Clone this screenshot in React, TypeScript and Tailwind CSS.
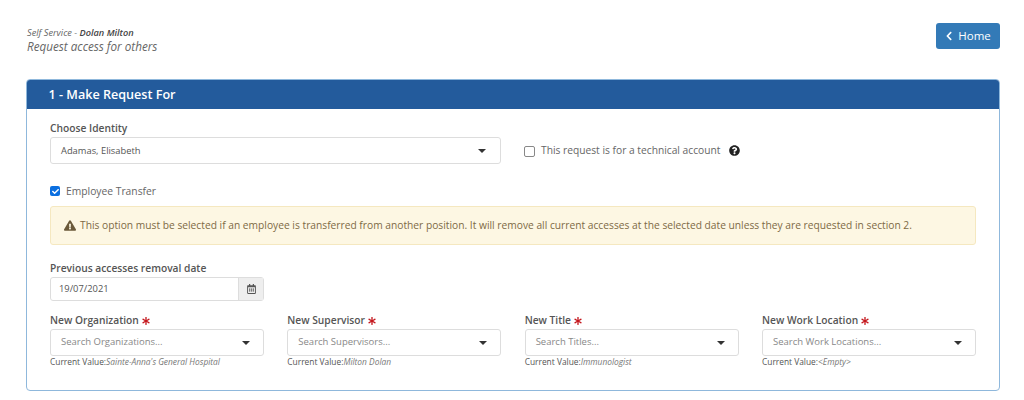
import { FaAsterisk, FaCheck, FaChevronLeft, FaExclamationTriangle, FaQuestionCircle, FaRegCalendarAlt } from "react-icons/fa";

const FIELDS = [
  { label: "New Organization", placeholder: "Search Organizations...", current: "Sainte-Anna's General Hospital" },
  { label: "New Supervisor", placeholder: "Search Supervisors...", current: "Milton Dolan" },
  { label: "New Title", placeholder: "Search Titles...", current: "Immunologist" },
  { label: "New Work Location", placeholder: "Search Work Locations...", current: "<Empty>" },
];

function Caret() {
  return <span className="h-0 w-0 border-x-[4px] border-t-[4px] border-x-transparent border-t-[#333]" />;
}

export default function App() {
  return (
    <div className="h-[400px] w-[1024px] overflow-hidden bg-white font-['Open_Sans',sans-serif] text-[#555]">
      <div className="flex items-start justify-between pl-[27px] pr-[24px] pt-[23px]">
        <div className="pt-[4px] italic">
          <div className="text-[9.2px] leading-[12px] text-[#666]">
            Self Service - <span className="font-semibold text-[#444]">Dolan Milton</span>
          </div>
          <div className="text-[11.7px] leading-[15px] text-[#666]">Request access for others</div>
        </div>
        <div className="flex h-[26px] w-[64px] items-center justify-center gap-[5px] rounded-[3px] bg-[#337ab7] text-[11.5px] text-white">
          <FaChevronLeft className="h-[10px] w-[8px]" />
          Home
        </div>
      </div>

      <div className="ml-[26px] mt-[25px] h-[312px] w-[974px] overflow-hidden rounded-[4px] border border-[#8fb8dc]">
        <div className="flex h-[29px] items-center bg-[#235b9c] pl-[21.5px] pt-[1px] text-[12.6px] font-semibold text-white">
          1 - Make Request For
        </div>

        <div className="pl-[23px] pr-[23px]">
          <div className="pt-[13px] text-[10.24px] font-semibold leading-[13px] text-[#555]">Choose Identity</div>
          <div className="mt-[2px] flex items-center">
            <div className="flex h-[27px] w-[451px] items-center justify-between rounded-[3px] border border-[#ddd] pl-[10px] pr-[14px] pt-[1px] text-[9.35px] text-[#555]">
              Adamas, Elisabeth
              <Caret />
            </div>
            <span className="ml-[23px] mt-[1px] h-[11px] w-[11px] rounded-[2px] border border-[#888] bg-white" />
            <span className="ml-[6px] mt-[1px] text-[10.24px] text-[#666]">This request is for a technical account</span>
            <FaQuestionCircle className="ml-[9px] h-[11px] w-[11px] text-[#222]" />
          </div>

          <div className="mt-[20px] flex items-center">
            <span className="flex h-[10px] w-[10px] items-center justify-center rounded-[2px] bg-[#0b6fe0]">
              <FaCheck className="h-[7px] w-[7px] text-white" />
            </span>
            <span className="ml-[6px] text-[10.3px] leading-[14px] text-[#666]">Employee Transfer</span>
          </div>

          <div className="mt-[8px] flex h-[39px] w-[926px] items-center rounded-[3px] border border-[#f5e8c0] bg-[#fdf7e3] pl-[13px] text-[10.24px] text-[#7d6a45]">
            <FaExclamationTriangle className="mr-[4px] h-[11px] w-[12px] text-[#6b5a3a]" />
            This option must be selected if an employee is transferred from another position. It will remove all current accesses at the selected date unless they are requested in section 2.
          </div>

          <div className="mt-[17px] text-[10.24px] font-semibold leading-[13px] text-[#555]">
            Previous accesses removal date
          </div>
          <div className="mt-[2px] flex h-[24px] w-[214px] rounded-[3px] border border-[#ddd]">
            <div className="flex flex-1 items-center pl-[8px] text-[9.35px] text-[#555]">19/07/2021</div>
            <div className="flex w-[25px] items-center justify-center border-l border-[#ddd] bg-[#eee]">
              <FaRegCalendarAlt className="h-[10px] w-[9px] text-[#555]" />
            </div>
          </div>

          <div className="mt-[13px] grid w-[926px] grid-cols-4 gap-x-[23.3px]">
            {FIELDS.map((f) => (
              <div key={f.label}>
                <div className="flex items-center text-[10.24px] font-semibold leading-[13px] text-[#555]">
                  {f.label}
                  <FaAsterisk className="ml-[3px] h-[8px] w-[8px] text-[#c4161c]" />
                </div>
                <div className="mt-[2px] flex h-[27px] items-center justify-between rounded-[3px] border border-[#ddd] pl-[10px] pr-[13px] text-[9.5px] text-[#888]">
                  {f.placeholder}
                  <Caret />
                </div>
                <div className="text-[8.4px] leading-[11px] text-[#555]">
                  Current Value:<span className="italic text-[#777]">{f.current}</span>
                </div>
              </div>
            ))}
          </div>
        </div>
      </div>
    </div>
  );
}
